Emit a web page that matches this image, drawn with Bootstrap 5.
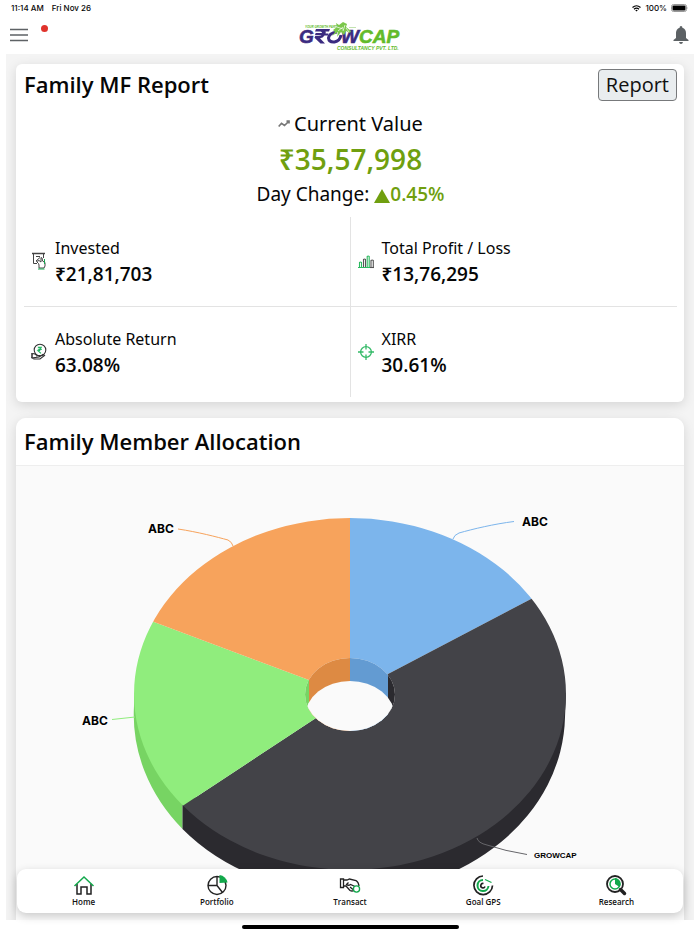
<!DOCTYPE html>
<html lang="en">
<head>
<meta charset="utf-8">
<meta name="viewport" content="width=device-width, initial-scale=1">
<title>Growcap – Family MF Report</title>
<link href="https://cdn.jsdelivr.net/npm/bootstrap@5.3.0/dist/css/bootstrap.min.css" rel="stylesheet">
<style>
  body { font-family: "Noto Sans", "Open Sans", sans-serif; color: #060606; background: #fff; }
  .app-shell { height: 100vh; }
  .status-bar { font: 500 8px/16px Inter, sans-serif; padding: 0 11px; }
  .status-bar svg { display: block; }
  .top-bar { height: 39px; padding: 0 11px 0 10px; }
  .top-side { flex: 1 1 0; }
  .icon-btn { border: 0; background: none; padding: 0; line-height: 0; }
  .alert-dot { width: 7px; height: 7px; background: #e0332c; margin: 0 0 12px 13px; }
  .viewport-area { margin: 0 6px; background: #f4f4f4; min-height: 0; }
  .scroll-area { overflow-y: auto; scrollbar-width: none; padding: 10px 10px 0; }
  .scroll-area::-webkit-scrollbar { display: none; }
  .panel { background: #fff; box-shadow: 0 3px 12px rgba(0,0,0,.13); border-radius: 6px; }
  .panel-title { font-family: "Open Sans", "Noto Sans", sans-serif; font-weight: 600; font-size: 22px; line-height: 30px; margin: 0; }
  .report-panel { padding: 5px 7px 5px 8px; margin-bottom: 16px; }
  .report-btn { font: 400 20px/30px "Open Sans", "Noto Sans", sans-serif; padding: 0 7px; border: 1px solid #77797b; border-radius: 4px; background: #e9edef; color: #111; }
  .line-current { font-size: 20px; line-height: 30px; margin-top: 8px; }
  .line-total { font-size: 28px; line-height: 40px; }
  .line-change { font-size: 19px; line-height: 30px; }
  .semi { font-family: "Open Sans", "Noto Sans", sans-serif; font-weight: 600; }
  .gain { color: #709f0f; }
  .stat-cell { height: 90px; padding: 0 7px; }
  .stats > :nth-child(odd) { border-right: 1px solid #e3e3e3; }
  .stats > :nth-child(-n+2) { border-bottom: 1px solid #e3e3e3; }
  .stats { margin-top: 8px; }
  .stat-label { font-size: 16px; line-height: 26px; }
  .stat-value { font-size: 19px; line-height: 26px; }
  .allocation-panel { border-radius: 10px 10px 0 0; background: #fafafa; overflow: hidden; }
  .allocation-head { background: #fff; padding: 8px 8px 9px; border-bottom: 1px solid #eee; }
  .chart text { font: 700 12px Inter, sans-serif; fill: #000; }
  .chart .caps { font: 700 8px "Liberation Sans", sans-serif; }
  .tab-bar { left: 11px; right: 11px; bottom: 7px; background: #fff; border-radius: 9px; box-shadow: 0 3px 10px rgba(0,0,0,.2); padding: 5px 0; }
  .tab-bar a { color: #111; font: 600 8px/12px "Open Sans", "Noto Sans", sans-serif; }
  .home-strip { height: 14px; }
  .home-strip span { width: 31%; height: 4px; background: #000; }
</style>
<script src="https://cdn.jsdelivr.net/npm/bootstrap@5.3.0/dist/js/bootstrap.bundle.min.js"></script>
</head>
<body>
<div class="app-shell d-flex flex-column">
  <div class="status-bar d-flex justify-content-between">
    <div class="d-flex gap-2"><span>11:14 AM</span><span>Fri Nov 26</span></div>
    <div class="d-flex align-items-center gap-1">
      <svg width="9" height="7" viewBox="0 0 18 14" fill="none" stroke="#000" stroke-width="2.4"><path d="M1 5Q9-2 17 5M4 8.400Q9 4 14 8.400"/><path d="M6.500 10.500Q9 8.500 11.500 10.500L9 13Z" fill="#000" stroke="none"/></svg>
      <span>100%</span>
      <svg width="18" height="8" viewBox="0 0 18 8"><rect x=".5" y=".5" width="15" height="7" rx="2" fill="#fff" stroke="#999"/><rect x="1.500" y="1.500" width="13" height="5" rx="1"/><path d="M16.500 2.500q1 1.500 0 3z" fill="#999"/></svg>
    </div>
  </div>

  <header class="top-bar d-flex align-items-center">
    <div class="top-side d-flex align-items-center">
      <button class="icon-btn" type="button" aria-label="Menu"><svg width="18" height="14" viewBox="0 0 18 14" stroke="#5e6265" stroke-width="1.500"><path d="M0 1.500h18M0 7h18M0 12.500h18"/></svg></button>
      <span class="alert-dot rounded-circle"></span>
    </div>
    <a href="#" aria-label="Growcap Consultancy home"><svg class="d-block" width="106" height="32" viewBox="0 0 106 32">
      <g font-family="Liberation Sans, sans-serif" font-weight="700" font-style="italic">
        <g font-size="19" stroke-width=".6">
          <text x="2" y="24" fill="#3b2b80" stroke="#3b2b80">G</text>
          <text x="44" y="24" fill="#3b2b80" stroke="#3b2b80">W</text>
          <text x="62" y="24" fill="#62bb2b" stroke="#62bb2b">CAP</text>
        </g>
        <path d="M19 10H33L32 12.500H28.500Q29 13.500 28.500 14.500H31.500L30.800 16.500H27.500Q26 19 23 19.200L28 24.500H23.500L17.500 18.800L18.300 16.800H21.500Q24 16.800 24.600 16H18L18.700 14H25Q25 12.500 23.500 12.500H18Z" fill="#3b2b80"/>
        <path d="M40 13Q32 14 31.500 19Q32 23.500 37.500 23Q43 22 44 16" fill="none" stroke="#3b2b80" stroke-width="3"/>
        <text x="40" y="31" font-size="5" fill="#62bb2b">CONSULTANCY PVT. LTD.</text>
        <text x="8" y="9" font-size="3" fill="#62bb2b">YOUR GROWTH PARTNER</text>
      </g>
      <path d="M35 17L38 13L36 11L40 8L39 4L42 6L46 3L50 5L49 8L54 12L53 14L49 12L47 16L44 13L40 18L41 13Z" fill="#7bc74b"/>
      <path d="M40 8l6 2M41 12l5-4M48 6l-2 6M49 9l3 4" stroke="#fff" stroke-width=".7"/>
      <path d="M52 8.500h7" stroke="#9bcf7c" stroke-width=".6"/>
    </svg></a>
    <div class="top-side d-flex justify-content-end">
      <button class="icon-btn" type="button" aria-label="Notifications"><svg width="16" height="18" viewBox="0 0 16 18" fill="#5c6164"><path d="M8 0Q9.500 0 9.400 1.700Q13 3 13 7V12L15.500 14V15H.5V14L3 12V7Q3 3 6.600 1.700Q6.500 0 8 0ZM6 16H10Q9.500 18 8 18Q6.500 18 6 16Z"/></svg></button>
    </div>
  </header>

  <div class="viewport-area position-relative flex-grow-1 d-flex">
    <main class="scroll-area w-100">
      <section class="panel report-panel">
        <div class="d-flex justify-content-between align-items-start">
          <h1 class="panel-title">Family MF Report</h1>
          <button type="button" class="report-btn">Report</button>
        </div>
        <div class="text-center">
          <div class="line-current d-flex align-items-center justify-content-center"><svg class="me-1" width="12" height="8" viewBox="0 0 12 8" fill="none" stroke="#777" stroke-width="1.700"><path d="M.7 6.500L3.500 3.300L6.500 5.500L11 1.200M8.500 1.200H11V3.600"/></svg>Current Value</div>
          <div class="line-total gain semi">₹35,57,998</div>
          <div class="line-change">Day Change: <span class="gain"><svg width="16" height="14" viewBox="0 0 16 14" fill="#709f0f"><path d="M8 0L16 14H0Z"/></svg><span class="semi">0.45%</span></span></div>
        </div>
        <div class="stats row g-0">
          <div class="stat-cell col-6 d-flex align-items-center gap-2">
            <svg width="16" height="18" viewBox="0 0 16 18" fill="none" stroke="#444"><path d="M1 1.500H14" stroke-width="1.500"/><path d="M2.500 1.500V11.500H6M12.500 1.500V6M5 4.500H9M5 9L9 5.500"/><path d="M7.500 11.500L5.500 9.500L8 8.500L10 10V5.500Q11.500 5 11.500 9L14 10.500V14L13 16H8V13Z"/><path d="M7 17H13.500M13.500 7V12" stroke="#18a850"/></svg>
            <div><div class="stat-label">Invested</div><div class="stat-value semi">₹21,81,703</div></div>
          </div>
          <div class="stat-cell col-6 d-flex align-items-center gap-2">
            <svg width="16" height="16" viewBox="0 0 16 16" fill="none" stroke-width="1.100"><path d="M5.500 14V6.500Q6.500 5.500 7.500 6.500V14M13 14V7.500Q14.200 6.500 15.300 7.500V14" stroke="#555"/><path d="M1.500 14V9.500Q2.500 8.500 3.500 9.500V14M9.200 14V3.500Q10.200 2.500 11.200 3.500V14M0 14.500H12" stroke="#2bb95f"/><path d="M12 14.500H16" stroke="#555"/></svg>
            <div><div class="stat-label">Total Profit / Loss</div><div class="stat-value semi">₹13,76,295</div></div>
          </div>
          <div class="stat-cell col-6 d-flex align-items-center gap-2">
            <svg width="16" height="18" viewBox="0 0 16 18" fill="none" stroke="#333" stroke-width="1.100"><circle cx="9" cy="7" r="5.800"/><path d="M1 11L3 10.500L6 12.500H8.500L8 14H5M8 14L12 11.500L13.500 12.500L9 16H3L1 15Z"/><path d="M1 10V15" stroke-width="1.500"/><path d="M6.800 4.300H11M6.800 6.200H11M7 4.300Q10 4.300 9.300 6.500Q9 7.700 7 7.700L10 10.300" stroke="#18b45a"/></svg>
            <div><div class="stat-label">Absolute Return</div><div class="stat-value semi">63.08%</div></div>
          </div>
          <div class="stat-cell col-6 d-flex align-items-center gap-2">
            <svg width="16" height="16" viewBox="0 0 16 16" fill="none" stroke="#35ba68" stroke-width="1.300"><circle cx="8" cy="8" r="5.400"/><path d="M8 0V5.500M8 10.500V16M0 8H5.500M10.500 8H16"/></svg>
            <div><div class="stat-label">XIRR</div><div class="stat-value semi">30.61%</div></div>
          </div>
        </div>
      </section>

      <section class="panel allocation-panel">
        <div class="allocation-head"><h2 class="panel-title">Family Member Allocation</h2></div>
        <svg class="chart d-block w-100" viewBox="16 465 668 480" role="img" aria-label="Family member allocation chart">
          <defs>
            <clipPath id="ring"><path clip-rule="evenodd" d="M134 693A216 176 0 0 1 566 693A216 176 0 0 1 134 693ZM305 693.500A45 36.500 0 0 0 395 693.500A45 36.500 0 0 0 305 693.500Z"/></clipPath>
            <clipPath id="hole"><ellipse cx="350" cy="693.500" rx="45" ry="36.500"/></clipPath>
          </defs>
          <path d="M134 693V705A215 180 0 0 0 182.500 828V790Z" fill="#77d463"/>
          <path d="M182.500 800V828A215 176 0 0 0 350 893A215 180 0 0 0 565 716L566 693Z" fill="#2b2a2f"/>
          <g clip-path="url(#ring)">
            <path d="M350 693V500H620V550.500L531 598L388 673Z" fill="#7cb5ec"/>
            <path d="M350 693L388 673L531 598L620 550.500V900H60V885.500L182.500 805L316 717Z" fill="#434348"/>
            <path d="M350 693L316 717L182.500 805L100 860V597L154 621L309 679Z" fill="#90ed7d"/>
            <path d="M350 693L309 679L154 621L100 597V500H350Z" fill="#f7a35c"/>
          </g>
          <g clip-path="url(#hole)">
            <path d="M300 650H309V740H300Z" fill="#77d463"/>
            <path d="M309 650H350V740H309Z" fill="#dd8a43"/>
            <path d="M350 650H388V740H350Z" fill="#639bd2"/>
            <path d="M388 650H400V740H388Z" fill="#2b2a2f"/>
            <ellipse cx="350" cy="716" rx="45" ry="36" fill="#fafafa"/>
          </g>
          <g fill="none">
            <path d="M178 528C198 531 217 536 228 539Q232 541 233 545" stroke="#f7a35c"/>
            <path d="M514 520.500C494 523 473 528 459 532Q454 534 453 538" stroke="#7cb5ec"/>
            <path d="M112 718.500L135 716" stroke="#90ed7d"/>
            <path d="M477 837Q478 842 487 844Q505 850 527 853.500" stroke="#66666a"/>
          </g>
          <text x="148" y="532">ABC</text>
          <text x="522" y="525">ABC</text>
          <text x="82" y="724">ABC</text>
          <text class="caps" x="534" y="857">GROWCAP</text>
        </svg>
      </section>
    </main>

    <nav class="tab-bar position-absolute d-flex" aria-label="Main">
      <a href="#" class="flex-fill w-100 text-decoration-none d-flex flex-column align-items-center"><svg width="22" height="22" viewBox="0 0 22 22" fill="none" stroke-width="1.500"><path d="M4 10V20H8V13H14V20H18V10" stroke="#222"/><path d="M1.500 12L11 3L20.500 12" stroke="#12a84b"/></svg>Home</a>
      <a href="#" class="flex-fill w-100 text-decoration-none d-flex flex-column align-items-center"><svg width="22" height="22" viewBox="0 0 22 22" fill="none" stroke="#222" stroke-width="1.400"><circle cx="11" cy="11.500" r="9"/><path d="M11 2.500V11.500H2M11 11.500L16.500 18.500"/><path d="M13.500 9V1Q20 2 21.500 8.500Z" fill="#12a84b" stroke="none"/></svg>Portfolio</a>
      <a href="#" class="flex-fill w-100 text-decoration-none d-flex flex-column align-items-center"><svg width="22" height="22" viewBox="0 0 22 22" fill="none" stroke="#222" stroke-width="1.300"><path d="M1.500 5H4.500V13.500H1.500ZM4.500 6H8L10.500 5L17 6.500Q19.500 8 20 12M4.500 12H7L11 16.500Q13 17.500 15 16.500M9.500 8.500L7.500 10.500Q9.500 12 11.500 10.500L16 12.500M11 13L14 15.500"/><circle cx="17.500" cy="15" r="3.100" fill="#fff" stroke="#12a84b"/></svg>Transact</a>
      <a href="#" class="flex-fill w-100 text-decoration-none d-flex flex-column align-items-center"><svg width="22" height="22" viewBox="0 0 22 22" fill="none" stroke-width="1.700"><path d="M11 2A9.300 9.300 0 1 0 20.500 11.500" stroke="#222"/><path d="M11 6A5.500 5.500 0 1 0 16.500 12" stroke="#12a84b" stroke-width="2"/><path d="M11.500 9.500A2.200 2.200 0 1 0 13 12.500" stroke="#222"/><path d="M13 5.500L19.500 8.500" stroke="#12a84b" stroke-width="1.200"/></svg>Goal GPS</a>
      <a href="#" class="flex-fill w-100 text-decoration-none d-flex flex-column align-items-center"><svg width="22" height="22" viewBox="0 0 22 22" fill="none"><circle cx="10" cy="10" r="8" stroke="#222" stroke-width="1.800"/><circle cx="10" cy="10" r="5" stroke="#12a84b" stroke-width="1.500"/><path d="M10 10V4A6 6 0 0 1 14.500 13Z" fill="#12a84b"/><path d="M15.500 15.500L19.500 19.500" stroke="#222" stroke-width="3.500" stroke-linecap="round"/></svg>Research</a>
    </nav>
  </div>
  <div class="home-strip d-flex justify-content-center align-items-center"><span class="rounded-pill"></span></div>
</div>
</body>
</html>
